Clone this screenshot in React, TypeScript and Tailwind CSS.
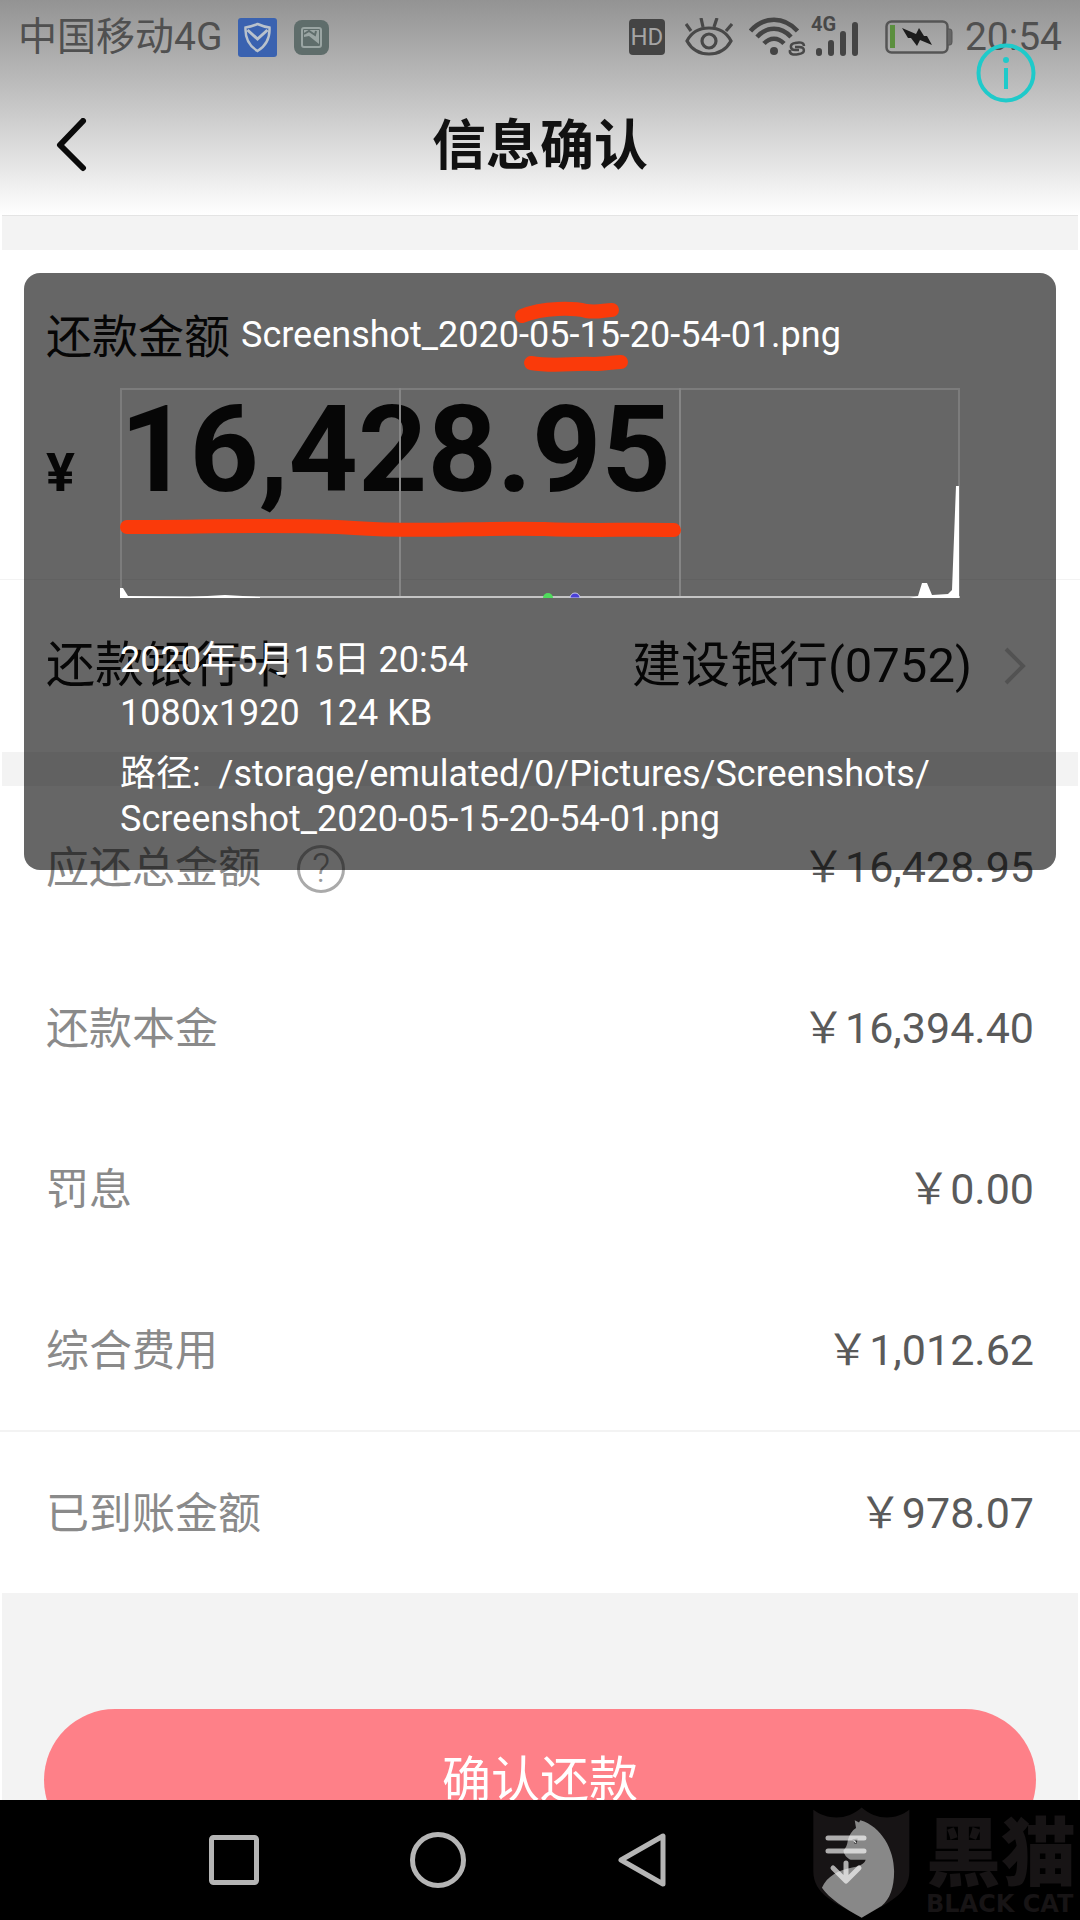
import React from "react";

const fees = [
  { label: "应还总金额", value: "￥16,428.95", help: true },
  { label: "还款本金", value: "￥16,394.40" },
  { label: "罚息", value: "￥0.00" },
  { label: "综合费用", value: "￥1,012.62" },
];

const StatusBar = () => (
  <div className="flex h-[74px] items-center justify-between pl-[18px] pr-[18px] text-[39px] leading-none text-[#505050]">
    <div className="flex items-center">
      <span>中国移动4G</span>
      <svg className="ml-4" width="39" height="39" viewBox="0 0 39 39" fill="none">
        <rect width="39" height="39" rx="3" fill="#3a62b0" />
        <path d="M19.500 6C15 8 11 9 7.500 9.500C7 20 11 28 19.500 33C28 28 32 20 31.500 9.500C28 9 24 8 19.500 6Z" stroke="#b9c2cc" strokeWidth="2.500" />
        <path d="M9.500 12L19.500 21L29.500 12" stroke="#b9c2cc" strokeWidth="3" />
      </svg>
      <svg className="ml-[17px]" width="35" height="35" viewBox="0 0 35 35" fill="none">
        <rect width="35" height="35" rx="8" fill="#5f6d6b" />
        <rect x="8" y="8" width="19" height="19" rx="2" stroke="#9aa5a3" strokeWidth="2" />
        <path d="M10 17V10H25V24L15 16Z" fill="#9aa5a3" />
        <path d="M10 14L15 11L21 15L22 11" stroke="#5f6d6b" strokeWidth="2" />
      </svg>
    </div>
    <div className="flex items-center">
      <span className="flex size-9 items-center justify-center rounded bg-[#444] text-2xl leading-none text-[#a5a5a5]">HD</span>
      <svg className="ml-5" width="48" height="38" viewBox="0 0 48 38" fill="none" stroke="#484848" strokeWidth="3.200">
        <path d="M2 23C7 13 15 10 24 10S41 13 46 23C41 32 33 36 24 36S7 32 2 23Z" />
        <circle cx="24" cy="23" r="7" />
        <path d="M6 13L1 6M18 9L16 0M29 9L32 0M41 13L47 6" />
      </svg>
      <svg className="ml-4" width="58" height="40" viewBox="0 0 58 40" fill="none" stroke="#444" strokeWidth="4.500">
        <path d="M1.500 14C15 -1 35 -1 48.500 14" />
        <path d="M8 20C18 9 32 9 42 20" />
        <path d="M15 26.500C21 20 29 20 35 26.500" />
        <circle cx="25" cy="34" r="4" fill="#444" stroke="none" />
        <path d="M55 29C55 25 50 25 46 26C40 27 41 33 46 33H50M41 33C40 38 45 38 50 37C57 36 56 30 50 30H46" stroke="#484848" strokeWidth="2.500" />
      </svg>
      <svg className="ml-1 overflow-visible" width="50" height="44" viewBox="0 0 50 44">
        <text x="0" y="16" fontFamily="Roboto" fontWeight="700" fontSize="20" fill="#484848">4G</text>
        <g stroke="#444" strokeWidth="6" strokeLinecap="round">
          <path d="M8 36V38M20 28V38M32 19V38M44 10V38" />
        </g>
      </svg>
      <svg className="ml-6" width="68" height="34" viewBox="0 0 68 34">
        <rect x="1.500" y="1.500" width="61" height="31" rx="5" fill="none" stroke="#555" strokeWidth="2.500" />
        <path d="M63 9H65Q67 9 67 12V22Q67 25 65 25H63" fill="#666" stroke="#555" />
        <rect x="5" y="5" width="5" height="23" fill="#5b8f3e" />
        <path d="M17 8L31 14L34 8L39 16H42L47 25L35 20L32 26L26 18H23Z" fill="#1c1c1c" />
      </svg>
      <span className="ml-3">20:54</span>
    </div>
  </div>
);

const Header = () => (
  <header className="bg-linear-to-b from-[#939393] to-white">
    <StatusBar />
    <div className="grid h-[141px] grid-cols-3 items-center px-12">
      <button type="button" aria-label="返回" className="justify-self-start pl-2">
        <svg width="32" height="54" viewBox="0 0 32 54" fill="none" stroke="#0a0a0a" strokeWidth="6" strokeLinecap="round" strokeLinejoin="round">
          <path d="M27 3L4 27L27 50" />
        </svg>
      </button>
      <h1 className="pt-1 text-center text-[54px] font-bold leading-none text-[#111]">信息确认</h1>
    </div>
  </header>
);

const Bill = () => (
  <main className="min-h-0 flex-1 overflow-hidden bg-white">
    <div className="mx-0.5 h-[35px] border-t border-[#e4e4e4] bg-[#f3f3f3]" />
    <section className="h-[330px] border-b border-[#f3f3f3] px-[46px] pt-[60px] text-[#111]">
      <h2 className="text-[46px] leading-[54px]">还款金额</h2>
      <p className="mt-4 flex items-baseline font-bold leading-[140px]">
        <span className="w-[74px] text-[54px]">¥</span>
        <span className="text-[121px]">16,428.95</span>
      </p>
    </section>
    <button type="button" className="flex h-[172px] w-full items-center px-[46px] text-left text-[49px] text-[#111]">
      <span className="flex-1">还款银行卡</span>
      <span>建设银行(0752)</span>
      <svg className="ml-8 mr-2" width="22" height="38" viewBox="0 0 22 38" fill="none" stroke="#ccc" strokeWidth="4">
        <path d="M2 2L19 19L2 36" />
      </svg>
    </button>
    <div className="mx-0.5 h-[34px] bg-[#f3f3f3]" />
    <dl className="text-[43px]">
      {fees.map((fee) => (
        <div key={fee.label} className="flex h-[161px] items-center justify-between px-[46px]">
          <dt className="flex items-center pt-1 text-[#8a8a8a]">
            {fee.label}
            {fee.help && (
              <button type="button" aria-label="说明" className="ml-9 flex size-12 items-center justify-center rounded-full border-3 border-[#aaa] text-[40px] font-light leading-none text-[#999]">
                ?
              </button>
            )}
          </dt>
          <dd className="pt-0.5 text-[#5a5a5a]">{fee.value}</dd>
        </div>
      ))}
      <div className="flex h-[163px] items-center justify-between border-t-2 border-[#f3f3f3] px-[46px]">
        <dt className="pt-1 text-[#8a8a8a]">已到账金额</dt>
        <dd className="pt-0.5 text-[#5a5a5a]">￥978.07</dd>
      </div>
    </dl>
    <div className="mx-0.5 bg-[#f3f3f3] px-[42px] pt-[116px]">
      <button type="button" className="h-[142px] w-full rounded-full bg-[#fe8088] pt-0.5 text-[49px] text-white">
        确认还款
      </button>
    </div>
  </main>
);

const Histogram = () => (
  <svg className="w-full" viewBox="0 0 840 210" fill="none">
    <rect x="1" y="1" width="838" height="208" stroke="#7c7c7c" strokeWidth="2" />
    <path d="M280 0V210M560 0V210" stroke="#858585" strokeWidth="2" />
    <path d="M0 209H840" stroke="#c4c4c4" strokeWidth="2" />
    <path d="M0 210V200H3L8 208L70 209L105 207L140 209V210Z" fill="#fff" />
    <path d="M423 210A5 5 0 0 1 433 210Z" fill="#4fdc5c" />
    <path d="M450 210A5 5 0 0 1 460 210Z" fill="#4a40d8" stroke="#c8c8e8" />
    <path d="M790 210L798 208L802 195H807L812 207L828 206L832 202L836 98H839V210Z" fill="#fff" />
  </svg>
);

const FileDetails = () => (
  <aside className="absolute inset-x-6 top-[273px] rounded-2xl bg-black/60 pb-7 pt-10 text-[36px] leading-[45px] text-white">
    <p className="ml-[217px]">Screenshot_2020-05-15-20-54-01.png</p>
    <div className="mx-24">
      <div className="mt-[30px] flex">
        <Histogram />
      </div>
      <p className="mt-10">2020年5月15日 20:54</p>
      <p className="mt-2 whitespace-pre">1080x1920  124 KB</p>
      <p className="mt-4 whitespace-pre">
        路径:  /storage/emulated/0/Pictures/Screenshots/
        <br />
        Screenshot_2020-05-15-20-54-01.png
      </p>
    </div>
    <svg className="pointer-events-none absolute left-0 top-0 w-full" viewBox="0 0 1032 596" fill="none" stroke="#fa3a0a" strokeWidth="14" strokeLinecap="round">
      <path d="M498 43C520 34 550 35 562 38C574 40 580 37 588 37" />
      <path d="M507 90C530 94 548 90 570 91C582 91 590 89 597 89" />
      <path d="M103 254C180 254 270 251 330 255C400 260 460 254 520 256C570 258 600 256 650 257" />
    </svg>
  </aside>
);

const Watermark = () => (
  <div className="pointer-events-none absolute bottom-0 right-0 flex items-start pr-1 text-[#171415]">
    <svg width="98" height="114" viewBox="90 75 296 340">
      <path d="M94 84C140 118 200 114 240 77C280 114 340 118 384 84V270C384 340 320 365 240 410C160 365 94 340 94 270Z" fill="#171415" />
      <path d="M219 116L232 123L236 116C300 135 338 205 338 270C338 320 325 355 300 375L240 410C190 385 140 350 120 320C135 285 170 266 215 258C240 253 250 244 252 235H207C196 231 186 219 185 207C192 200 197 190 198 178C202 160 212 145 223 139Z" fill="#888" />
      <path d="M212 173L228 171L225 186L219 187Z" fill="#222" />
      <path d="M215 177L223 184" stroke="#ddd" strokeWidth="4" />
    </svg>
    <div className="ml-4 flex flex-col">
      <span className="font-['Noto_Sans_CJK_SC'] text-[75px] font-black leading-[84px]">黑猫</span>
      <span className="font-['DejaVu_Sans'] text-2xl font-bold leading-[28px]">BLACK CAT</span>
    </div>
  </div>
);

const NavBar = () => (
  <nav className="relative h-[120px] shrink-0 bg-black">
    <Watermark />
    <div className="relative grid h-full grid-cols-4 px-33">
      <button type="button" aria-label="最近任务" className="flex items-center justify-center">
        <svg width="50" height="50" viewBox="0 0 50 50" fill="none" stroke="#b5b5b5" strokeWidth="5">
          <rect x="2.500" y="2.500" width="45" height="45" rx="2" />
        </svg>
      </button>
      <button type="button" aria-label="主屏幕" className="flex items-center justify-center">
        <svg width="56" height="56" viewBox="0 0 56 56" fill="none" stroke="#b5b5b5" strokeWidth="5">
          <circle cx="28" cy="28" r="25.500" />
        </svg>
      </button>
      <button type="button" aria-label="后退" className="flex items-center justify-center">
        <svg width="50" height="56" viewBox="0 0 50 56" fill="none" stroke="#b5b5b5" strokeWidth="5" strokeLinejoin="round">
          <path d="M46 4V52L4 28Z" />
        </svg>
      </button>
      <button type="button" aria-label="通知" className="flex items-center justify-center">
        <svg width="42" height="50" viewBox="0 0 42 50" fill="none" stroke="#fff" strokeOpacity="0.65" strokeWidth="5" strokeLinecap="round" strokeLinejoin="round">
          <path d="M3 3H39M3 16H39M21 28V45M8 33L21 46L34 33" />
        </svg>
      </button>
    </div>
  </nav>
);

const App = () => (
  <div className="relative flex h-screen flex-col overflow-hidden font-[Roboto,'Noto_Sans_CJK_SC',sans-serif]">
    <Header />
    <Bill />
    <FileDetails />
    <button type="button" aria-label="详细信息" className="absolute right-11 top-[43px]">
      <svg width="60" height="60" viewBox="0 0 60 60" fill="none" stroke="#1fcaca" strokeWidth="4">
        <circle cx="30" cy="30" r="27.500" />
        <path d="M30 25V46" />
        <circle cx="30" cy="17" r="3" fill="#1fcaca" stroke="none" />
      </svg>
    </button>
    <NavBar />
  </div>
);

export default App;
